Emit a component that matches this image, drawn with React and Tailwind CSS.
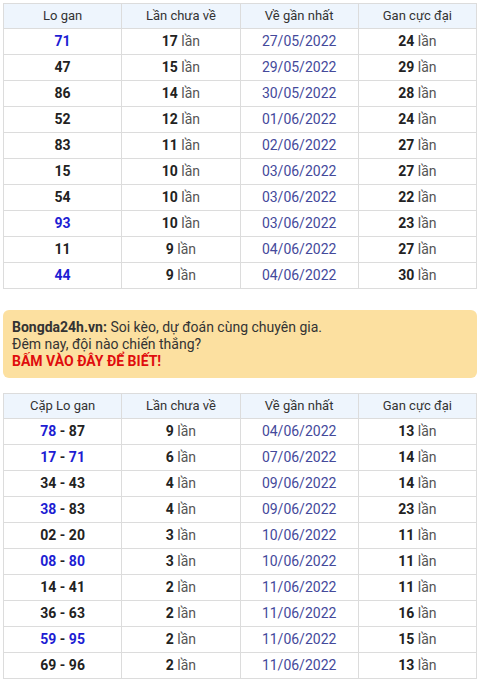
import React from "react";

const loGan = [
  { n: "71", blue: true, l: 17, d: "27/05/2022", g: 24 },
  { n: "47", l: 15, d: "29/05/2022", g: 29 },
  { n: "86", l: 14, d: "30/05/2022", g: 28 },
  { n: "52", l: 12, d: "01/06/2022", g: 24 },
  { n: "83", l: 11, d: "02/06/2022", g: 27 },
  { n: "15", l: 10, d: "03/06/2022", g: 27 },
  { n: "54", l: 10, d: "03/06/2022", g: 22 },
  { n: "93", blue: true, l: 10, d: "03/06/2022", g: 23 },
  { n: "11", l: 9, d: "04/06/2022", g: 27 },
  { n: "44", blue: true, l: 9, d: "04/06/2022", g: 30 },
];

const capLo = [
  { a: "78", b: "87", ba: true, l: 9, d: "04/06/2022", g: 13 },
  { a: "17", b: "71", ba: true, bb: true, l: 6, d: "07/06/2022", g: 14 },
  { a: "34", b: "43", l: 4, d: "09/06/2022", g: 14 },
  { a: "38", b: "83", ba: true, l: 4, d: "09/06/2022", g: 23 },
  { a: "02", b: "20", l: 3, d: "10/06/2022", g: 11 },
  { a: "08", b: "80", ba: true, bb: true, l: 3, d: "10/06/2022", g: 11 },
  { a: "14", b: "41", l: 2, d: "11/06/2022", g: 11 },
  { a: "36", b: "63", l: 2, d: "11/06/2022", g: 16 },
  { a: "59", b: "95", ba: true, bb: true, l: 2, d: "11/06/2022", g: 15 },
  { a: "69", b: "96", l: 2, d: "11/06/2022", g: 13 },
];

function Lan({ v }) {
  return (
    <>
      <span className="font-bold text-[#222]">{v}</span>{" "}
      <span className="text-[#555]">lần</span>
    </>
  );
}

function Head({ first }) {
  const th = "h-[25px] border border-[#dcdcdc] bg-[#eef5fd] font-normal text-[13px] text-[#333]";
  return (
    <thead>
      <tr>
        <th className={th}>{first}</th>
        <th className={th}>Lần chưa về</th>
        <th className={th}>Về gần nhất</th>
        <th className={th}>Gan cực đại</th>
      </tr>
    </thead>
  );
}

const td = "h-[26px] border border-[#dcdcdc] text-center text-[14px]";

export default function App() {
  return (
    <div className="w-[480px] h-[680px] bg-white px-[3px] pt-[3px] overflow-hidden" style={{ fontFamily: "Roboto, 'Noto Sans', sans-serif" }}>
      <table className="w-full table-fixed border-collapse">
        <Head first="Lo gan" />
        <tbody>
          {loGan.map((r, i) => (
            <tr key={i}>
              <td className={`${td} font-bold ${r.blue ? "text-[#1d1dd3]" : "text-[#222]"}`}>{r.n}</td>
              <td className={td}><Lan v={r.l} /></td>
              <td className={`${td} text-[#44499b]`}>{r.d}</td>
              <td className={td}><Lan v={r.g} /></td>
            </tr>
          ))}
        </tbody>
      </table>

      <div className="mt-[21px] rounded-md bg-[#fce0a0] px-[9px] pt-[9px] pb-[8px] text-[14px] leading-[17px] text-[#333]">
        <div>
          <span className="font-bold">Bongda24h.vn:</span> Soi kèo, dự đoán cùng chuyên gia.
        </div>
        <div>Đêm nay, đội nào chiến thắng?</div>
        <div className="font-bold text-[#e00d0d]">BẤM VÀO ĐÂY ĐỂ BIẾT!</div>
      </div>

      <table className="mt-[15px] w-full table-fixed border-collapse">
        <Head first="Cặp Lo gan" />
        <tbody>
          {capLo.map((r, i) => (
            <tr key={i}>
              <td className={`${td} font-bold text-[#222]`}>
                <span className={r.ba ? "text-[#1d1dd3]" : ""}>{r.a}</span>
                {" - "}
                <span className={r.bb ? "text-[#1d1dd3]" : ""}>{r.b}</span>
              </td>
              <td className={td}><Lan v={r.l} /></td>
              <td className={`${td} text-[#44499b]`}>{r.d}</td>
              <td className={td}><Lan v={r.g} /></td>
            </tr>
          ))}
        </tbody>
      </table>
    </div>
  );
}
